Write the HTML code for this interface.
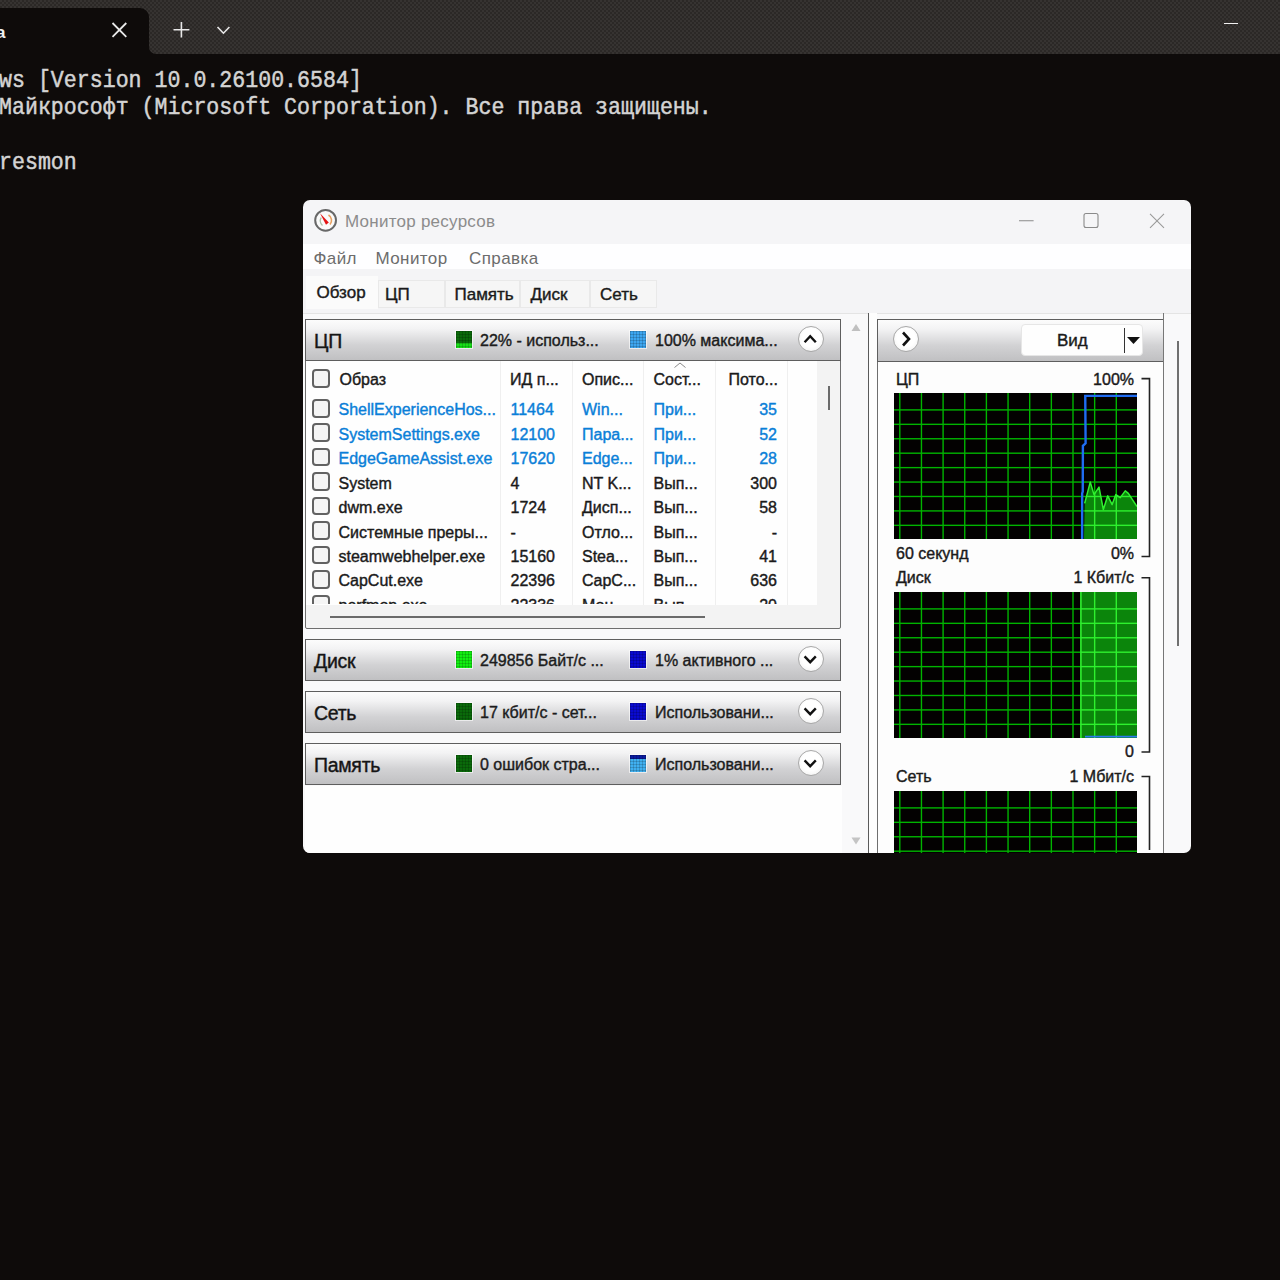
<!DOCTYPE html><html><head><meta charset="utf-8"><style>
*{margin:0;padding:0;box-sizing:border-box}
html,body{width:1280px;height:1280px;overflow:hidden;background:#0e0b0a;font-family:"Liberation Sans",sans-serif}
.a{position:absolute}
.mono{position:absolute;font-family:"Liberation Mono",monospace;color:#d4d4d4;font-size:21.6px;line-height:1;white-space:pre;transform:scaleY(1.106);transform-origin:0 0;-webkit-text-stroke:0.45px #d4d4d4}
.t{position:absolute;white-space:nowrap;line-height:1;color:#1a1a1a;-webkit-text-stroke:0.4px currentColor}
#win{left:0;top:0;width:1280px;height:1280px;clip-path:inset(200px 89px 427px 303px round 7px)}
.hdr{position:absolute;left:305px;width:536px;height:42px;border:1px solid #5e5e5e;background:linear-gradient(#fcfcfc 0%,#f3f3f4 22%,#d2d2d4 62%,#c0c0c2 100%)}
.htitle{position:absolute;font-size:19.5px;letter-spacing:-0.3px;color:#151515;white-space:nowrap;line-height:1;-webkit-text-stroke:0.4px #151515}
.sq{position:absolute;width:16px;height:17px;box-shadow:0 0 0 1px rgba(255,255,255,.6)}
.sq::after{content:'';position:absolute;inset:0;background-image:linear-gradient(rgba(0,0,0,.16) 1px,transparent 1px),linear-gradient(90deg,rgba(0,0,0,.16) 1px,transparent 1px);background-size:3px 3px}
.hs{position:absolute;font-size:16px;color:#1c1c1c;white-space:nowrap;line-height:1;-webkit-text-stroke:0.4px #1c1c1c}
.cbtn{position:absolute;width:26px;height:26px;border-radius:50%;border:1px solid #a8a8a8;background:radial-gradient(circle at 50% 45%,#ffffff 50%,#ececec 100%)}
.cb{position:absolute;left:311.6px;width:18.4px;height:18.6px;border:2px solid #626262;border-radius:4px;background:#f5f5f5}
.r{position:absolute;font-size:16px;white-space:nowrap;line-height:1;color:#1a1a1a;-webkit-text-stroke:0.4px currentColor}
.bl{color:#0a7fd8}
</style></head><body>
<div class="a" style="left:0;top:0;width:1280px;height:53.5px;background-color:#302d2b;background-image:repeating-conic-gradient(#2b2826 0 25%,#363331 0 50%);background-size:4px 4px"></div>
<div class="a" style="left:-20px;top:7.5px;width:169px;height:46px;background:#0e0b0a;border-radius:9px 9px 0 0"></div>
<div class="a" style="left:149px;top:46px;width:7px;height:7.5px;background:#0e0b0a"></div>
<div class="a" style="left:149px;top:40px;width:14px;height:13.5px;background-color:#302d2b;background-image:repeating-conic-gradient(#2b2826 0 25%,#363331 0 50%);background-size:4px 4px;background-position:-149px -40px;border-radius:0 0 0 7px"></div>
<svg class="a" style="left:0;top:0" width="260" height="53">
 <path d="M112.5 23 L126.3 36.9 M126.3 23 L112.5 36.9" stroke="#e8e8e8" stroke-width="1.8" fill="none"/>
 <path d="M173.5 29.8 H189.4 M181.4 21.9 V37.5" stroke="#e8e8e8" stroke-width="1.6" fill="none"/>
 <path d="M217.5 27 L223.4 33.2 L229.4 27" stroke="#e8e8e8" stroke-width="1.6" fill="none"/>
</svg>
<div class="t" style="left:-4px;top:24px;font-size:17px;font-weight:bold;color:#f0f0f0;-webkit-text-stroke:0">а</div>
<div class="a" style="left:1224px;top:22.5px;width:14px;height:1.5px;background:#f0f0f0"></div>
<div class="mono" style="left:-1px;top:68.5px">ws [Version 10.0.26100.6584]</div>
<div class="mono" style="left:-1px;top:96px">Майкрософт (Microsoft Corporation). Все права защищены.</div>
<div class="mono" style="left:-1px;top:150.5px">resmon</div>
<div class="a" id="win">
<div class="a" style="left:303px;top:200px;width:888px;height:44px;background:#f5f5f7"></div>
<div class="a" style="left:303px;top:244px;width:888px;height:25px;background:#fefeff"></div>
<div class="a" style="left:303px;top:269px;width:888px;height:44px;background:#f4f4f6"></div>
<div class="a" style="left:303px;top:313px;width:888px;height:540px;background:#f9f9fa"></div>
<div class="a" style="left:303px;top:312.5px;width:888px;height:1px;background:#e4e4e4"></div>
<svg class="a" style="left:313px;top:208px" width="26" height="26">
  <circle cx="12.6" cy="12.3" r="10.4" fill="#fafafa" stroke="#686868" stroke-width="2"/>
  <path d="M8.2 9.5 A6.3 6.3 0 0 0 9.5 17.5" stroke="#a8c0a8" stroke-width="1.4" fill="none"/>
  <path d="M15.5 7 A6.3 6.3 0 0 1 17 16.5" stroke="#e8a060" stroke-width="1.6" fill="none"/>
  <path d="M7 5.2 L15.8 14.6 L13 16.8 Z" fill="#e41414"/>
 </svg>
<div class="t" style="left:345px;top:213.3px;font-size:17px;letter-spacing:0.25px;color:#8c8c8c;-webkit-text-stroke:0">Монитор ресурсов</div>
<svg class="a" style="left:1010px;top:205px" width="170" height="30">
  <path d="M9 15.8 H23.6" stroke="#8a8a8a" stroke-width="1.1"/>
  <rect x="74" y="8.5" width="14" height="14" rx="2" fill="none" stroke="#8a8a8a" stroke-width="1.1"/>
  <path d="M140 8.8 L154 22.8 M154 8.8 L140 22.8" stroke="#9a9a9a" stroke-width="1.1"/>
 </svg>
<div class="t" style="left:313.5px;top:249.5px;font-size:17px;letter-spacing:0.4px;color:#6c6c6c;-webkit-text-stroke:0">Файл</div>
<div class="t" style="left:375.5px;top:249.5px;font-size:17px;letter-spacing:0.4px;color:#6c6c6c;-webkit-text-stroke:0">Монитор</div>
<div class="t" style="left:469px;top:249.5px;font-size:17px;letter-spacing:0.4px;color:#6c6c6c;-webkit-text-stroke:0">Справка</div>
<div class="a" style="left:306px;top:276px;width:72px;height:33px;background:#fbfbfb"></div>
<div class="a" style="left:378px;top:280px;width:66.6px;height:28px;background:#f6f6f6;border:1px solid #e9e9e9"></div>
<div class="a" style="left:444.6px;top:280px;width:75.6px;height:28px;background:#f6f6f6;border:1px solid #e9e9e9"></div>
<div class="a" style="left:520.2px;top:280px;width:69.8px;height:28px;background:#f6f6f6;border:1px solid #e9e9e9"></div>
<div class="a" style="left:590px;top:280px;width:66.6px;height:28px;background:#f6f6f6;border:1px solid #e9e9e9"></div>
<div class="t" style="left:316.5px;top:283.5px;font-size:17px">Обзор</div>
<div class="t" style="left:385px;top:286px;font-size:17px">ЦП</div>
<div class="t" style="left:454.5px;top:286px;font-size:17px">Память</div>
<div class="t" style="left:530.5px;top:286px;font-size:17px">Диск</div>
<div class="t" style="left:600px;top:286px;font-size:17px">Сеть</div>
<div class="a" style="left:305px;top:319px;width:536px;height:310px;border:1px solid #6e6e6e;border-radius:0 0 2px 2px;background:#f3f3f3"></div>
<div class="a" style="left:306px;top:361px;width:511px;height:244px;background:#fefefe"></div>
<div class="a" style="left:499.5px;top:361px;width:1px;height:244px;background:#efefef"></div>
<div class="a" style="left:571.5px;top:361px;width:1px;height:244px;background:#efefef"></div>
<div class="a" style="left:643px;top:361px;width:1px;height:244px;background:#efefef"></div>
<div class="a" style="left:715px;top:361px;width:1px;height:244px;background:#efefef"></div>
<div class="a" style="left:787px;top:361px;width:1px;height:244px;background:#efefef"></div>
<div class="a" style="left:828px;top:386px;width:1.5px;height:24px;background:#6a6a6a"></div>
<div class="a" style="left:330px;top:616px;width:375px;height:1.6px;background:#6a6a6a"></div>
<svg class="a" style="left:672px;top:361px" width="16" height="8"><path d="M2.5 6.5 L8 2 L13.5 6.5" stroke="#8a8a8a" stroke-width="1" fill="none"/></svg>
<div class="cb" style="top:369px"></div>
<div class="r" style="left:339.5px;top:372.3px">Образ</div>
<div class="r" style="left:510px;top:372.3px">ИД п...</div>
<div class="r" style="left:582px;top:372.3px">Опис...</div>
<div class="r" style="left:653.5px;top:372.3px">Сост...</div>
<div class="r" style="left:728.5px;top:372.3px">Пото...</div>
<div class="a" style="left:306px;top:605px;width:511px;height:0;overflow:visible"></div>
<div class="a" style="left:306px;top:390px;width:511px;height:213.6px;overflow:hidden">
<div class="cb" style="left:5.6px;top:9.0px"></div>
<div class="r bl" style="left:32.5px;top:12.3px">ShellExperienceHos...</div>
<div class="r bl" style="left:204.5px;top:12.3px">11464</div>
<div class="r bl" style="left:276px;top:12.3px">Win...</div>
<div class="r bl" style="left:347.5px;top:12.3px">При...</div>
<div class="r bl" style="right:40px;top:12.3px">35</div>
<div class="cb" style="left:5.6px;top:33.4px"></div>
<div class="r bl" style="left:32.5px;top:36.7px">SystemSettings.exe</div>
<div class="r bl" style="left:204.5px;top:36.7px">12100</div>
<div class="r bl" style="left:276px;top:36.7px">Пара...</div>
<div class="r bl" style="left:347.5px;top:36.7px">При...</div>
<div class="r bl" style="right:40px;top:36.7px">52</div>
<div class="cb" style="left:5.6px;top:57.9px"></div>
<div class="r bl" style="left:32.5px;top:61.2px">EdgeGameAssist.exe</div>
<div class="r bl" style="left:204.5px;top:61.2px">17620</div>
<div class="r bl" style="left:276px;top:61.2px">Edge...</div>
<div class="r bl" style="left:347.5px;top:61.2px">При...</div>
<div class="r bl" style="right:40px;top:61.2px">28</div>
<div class="cb" style="left:5.6px;top:82.3px"></div>
<div class="r" style="left:32.5px;top:85.6px">System</div>
<div class="r" style="left:204.5px;top:85.6px">4</div>
<div class="r" style="left:276px;top:85.6px">NT K...</div>
<div class="r" style="left:347.5px;top:85.6px">Вып...</div>
<div class="r" style="right:40px;top:85.6px">300</div>
<div class="cb" style="left:5.6px;top:106.8px"></div>
<div class="r" style="left:32.5px;top:110.1px">dwm.exe</div>
<div class="r" style="left:204.5px;top:110.1px">1724</div>
<div class="r" style="left:276px;top:110.1px">Дисп...</div>
<div class="r" style="left:347.5px;top:110.1px">Вып...</div>
<div class="r" style="right:40px;top:110.1px">58</div>
<div class="cb" style="left:5.6px;top:131.2px"></div>
<div class="r" style="left:32.5px;top:134.5px">Системные преры...</div>
<div class="r" style="left:204.5px;top:134.5px">-</div>
<div class="r" style="left:276px;top:134.5px">Отло...</div>
<div class="r" style="left:347.5px;top:134.5px">Вып...</div>
<div class="r" style="right:40px;top:134.5px">-</div>
<div class="cb" style="left:5.6px;top:155.7px"></div>
<div class="r" style="left:32.5px;top:159.0px">steamwebhelper.exe</div>
<div class="r" style="left:204.5px;top:159.0px">15160</div>
<div class="r" style="left:276px;top:159.0px">Stea...</div>
<div class="r" style="left:347.5px;top:159.0px">Вып...</div>
<div class="r" style="right:40px;top:159.0px">41</div>
<div class="cb" style="left:5.6px;top:180.2px"></div>
<div class="r" style="left:32.5px;top:183.4px">CapCut.exe</div>
<div class="r" style="left:204.5px;top:183.4px">22396</div>
<div class="r" style="left:276px;top:183.4px">CapC...</div>
<div class="r" style="left:347.5px;top:183.4px">Вып...</div>
<div class="r" style="right:40px;top:183.4px">636</div>
<div class="cb" style="left:5.6px;top:204.6px"></div>
<div class="r" style="left:32.5px;top:207.9px">perfmon.exe</div>
<div class="r" style="left:204.5px;top:207.9px">22336</div>
<div class="r" style="left:276px;top:207.9px">Мон...</div>
<div class="r" style="left:347.5px;top:207.9px">Вып...</div>
<div class="r" style="right:40px;top:207.9px">20</div>
</div>
<div class="hdr" style="top:319px"></div>
<div class="htitle" style="left:314px;top:331.5px">ЦП</div>
<div class="sq" style="left:456px;top:331px;background:linear-gradient(#0a6a0a 0%,#0a6a0a 72%,#18e018 72%)"></div>
<div class="hs" style="left:480px;top:333.3px">22% - использ...</div>
<div class="sq" style="left:630px;top:331px;background:#3da6f0"></div>
<div class="hs" style="left:655px;top:333.3px">100% максима...</div>
<div class="cbtn" style="left:797.5px;top:325.5px"></div>
<svg class="a" style="left:797.3px;top:325.5px" width="26" height="26"><path d="M7.6 16.2 L13.2 10.2 L18.8 16.2" stroke="#111" stroke-width="2.4" fill="none"/></svg>
<div class="a" style="left:305px;top:786px;width:537px;height:67px;background:#fefefe"></div>
<div class="hdr" style="top:639px"></div>
<div class="htitle" style="left:314px;top:651.5px">Диск</div>
<div class="sq" style="left:456px;top:651px;background:#11ee11"></div>
<div class="hs" style="left:480px;top:653.3px">249856 Байт/с ...</div>
<div class="sq" style="left:630px;top:651px;background:#0a0ad0"></div>
<div class="hs" style="left:655px;top:653.3px">1% активного ...</div>
<div class="cbtn" style="left:797.5px;top:645.5px"></div>
<svg class="a" style="left:797.3px;top:645.5px" width="26" height="26"><path d="M7.6 10.4 L13.2 16.2 L18.8 10.4" stroke="#111" stroke-width="2.4" fill="none"/></svg>
<div class="hdr" style="top:691px"></div>
<div class="htitle" style="left:314px;top:703.5px">Сеть</div>
<div class="sq" style="left:456px;top:703px;background:#0a6a0a"></div>
<div class="hs" style="left:480px;top:705.3px">17 кбит/с - сет...</div>
<div class="sq" style="left:630px;top:703px;background:#0a0ad0"></div>
<div class="hs" style="left:655px;top:705.3px">Использовани...</div>
<div class="cbtn" style="left:797.5px;top:697.5px"></div>
<svg class="a" style="left:797.3px;top:697.5px" width="26" height="26"><path d="M7.6 10.4 L13.2 16.2 L18.8 10.4" stroke="#111" stroke-width="2.4" fill="none"/></svg>
<div class="hdr" style="top:743px"></div>
<div class="htitle" style="left:314px;top:755.5px">Память</div>
<div class="sq" style="left:456px;top:755px;background:#0a6a0a"></div>
<div class="hs" style="left:480px;top:757.3px">0 ошибок стра...</div>
<div class="sq" style="left:630px;top:755px;background:linear-gradient(#0a1aa0 0%,#0a1aa0 25%,#40b0f0 25%)"></div>
<div class="hs" style="left:655px;top:757.3px">Использовани...</div>
<div class="cbtn" style="left:797.5px;top:749.5px"></div>
<svg class="a" style="left:797.3px;top:749.5px" width="26" height="26"><path d="M7.6 10.4 L13.2 16.2 L18.8 10.4" stroke="#111" stroke-width="2.4" fill="none"/></svg>
<svg class="a" style="left:849px;top:322px" width="14" height="10"><path d="M7 2 L11.5 9 L2.5 9 Z" fill="#c0c0c0"/></svg>
<svg class="a" style="left:849px;top:836px" width="14" height="10"><path d="M7 8.5 L11.5 1.5 L2.5 1.5 Z" fill="#c4c4c4"/></svg>
<div class="a" style="left:867.5px;top:313px;width:1.6px;height:540px;background:#5a5a5a"></div>
<div class="a" style="left:869px;top:313px;width:8px;height:540px;background:#fdfdfd"></div>
<div class="a" style="left:876.5px;top:319px;width:287.5px;height:560px;background:#fdfdfd;border:1px solid #6e6e6e"></div>
<div class="a" style="left:876.5px;top:319px;width:287.5px;height:42.5px;border:1px solid #5e5e5e;background:linear-gradient(#fcfcfc 0%,#f3f3f4 22%,#d2d2d4 62%,#c0c0c2 100%)"></div>
<div class="cbtn" style="left:892.5px;top:326px"></div>
<svg class="a" style="left:892.5px;top:326px" width="26" height="26"><path d="M10 6.5 L16 13 L10 19.5" stroke="#111" stroke-width="2.6" fill="none"/></svg>
<div class="a" style="left:1021px;top:323.5px;width:122px;height:32px;background:#fefefe;border-radius:4px;border:1px solid #e6e6e6"></div>
<div class="t" style="left:1057px;top:331.5px;font-size:17px">Вид</div>
<div class="a" style="left:1123.5px;top:327.5px;width:1.6px;height:25px;background:#333"></div>
<svg class="a" style="left:1126px;top:336px" width="15" height="9"><path d="M1 1 H14 L7.5 8 Z" fill="#111"/></svg>
<div class="a" style="left:1177px;top:341px;width:2px;height:305px;background:#707070"></div>
<div class="a" style="left:1163px;top:313px;width:1.2px;height:540px;background:#777"></div>
<svg class="a" style="left:893.75px;top:393.4px" width="243" height="146"><rect width="243" height="146" fill="#030101"/><g fill="#00b400"><rect x="5.10" y="0" width="1.4" height="146"/><rect x="26.75" y="0" width="1.4" height="146"/><rect x="48.40" y="0" width="1.4" height="146"/><rect x="70.05" y="0" width="1.4" height="146"/><rect x="91.70" y="0" width="1.4" height="146"/><rect x="113.35" y="0" width="1.4" height="146"/><rect x="135.00" y="0" width="1.4" height="146"/><rect x="156.65" y="0" width="1.4" height="146"/><rect x="178.30" y="0" width="1.4" height="146"/><rect x="199.95" y="0" width="1.4" height="146"/><rect x="221.60" y="0" width="1.4" height="146"/><rect x="0" y="16.20" width="243" height="1.4"/><rect x="0" y="30.63" width="243" height="1.4"/><rect x="0" y="45.06" width="243" height="1.4"/><rect x="0" y="59.49" width="243" height="1.4"/><rect x="0" y="73.92" width="243" height="1.4"/><rect x="0" y="88.35" width="243" height="1.4"/><rect x="0" y="102.78" width="243" height="1.4"/><rect x="0" y="117.21" width="243" height="1.4"/><rect x="0" y="131.64" width="243" height="1.4"/></g><clipPath id="cpuc"><path d="M190.65 110.35 L196.25 89.1 L200 101.6 L205 94.1 L209.35 116.6 L213.75 102.85 L218.15 111.6 L221.85 101.6 L226.25 104.6 L231.25 97.85 L234.35 100.35 L243 113.5 L243 146 L190 146 Z"/></clipPath><path d="M190.65 110.35 L196.25 89.1 L200 101.6 L205 94.1 L209.35 116.6 L213.75 102.85 L218.15 111.6 L221.85 101.6 L226.25 104.6 L231.25 97.85 L234.35 100.35 L243 113.5 L243 146 L190 146 Z" fill="#0b850b"/><g fill="#2ef02e" clip-path="url(#cpuc)"><rect x="5.10" y="0" width="1.4" height="146"/><rect x="26.75" y="0" width="1.4" height="146"/><rect x="48.40" y="0" width="1.4" height="146"/><rect x="70.05" y="0" width="1.4" height="146"/><rect x="91.70" y="0" width="1.4" height="146"/><rect x="113.35" y="0" width="1.4" height="146"/><rect x="135.00" y="0" width="1.4" height="146"/><rect x="156.65" y="0" width="1.4" height="146"/><rect x="178.30" y="0" width="1.4" height="146"/><rect x="199.95" y="0" width="1.4" height="146"/><rect x="221.60" y="0" width="1.4" height="146"/><rect x="0" y="16.20" width="243" height="1.4"/><rect x="0" y="30.63" width="243" height="1.4"/><rect x="0" y="45.06" width="243" height="1.4"/><rect x="0" y="59.49" width="243" height="1.4"/><rect x="0" y="73.92" width="243" height="1.4"/><rect x="0" y="88.35" width="243" height="1.4"/><rect x="0" y="102.78" width="243" height="1.4"/><rect x="0" y="117.21" width="243" height="1.4"/><rect x="0" y="131.64" width="243" height="1.4"/></g></svg>
<svg class="a" style="left:893.75px;top:393.4px" width="243" height="146">
<path d="M190.65 110.35 L196.25 89.1 L200 101.6 L205 94.1 L209.35 116.6 L213.75 102.85 L218.15 111.6 L221.85 101.6 L226.25 104.6 L231.25 97.85 L234.35 100.35 L243 113.5" stroke="#30f030" stroke-width="1.5" fill="none" stroke-linejoin="round"/>
<path d="M188.15 146 L188.15 100.35 L188.75 98.5 L188.9 52.85 L191.6 50.35 L191.25 2.85 L243 2.85" stroke="#1f6cf2" stroke-width="2.4" fill="none"/>
</svg>
<svg class="a" style="left:893.75px;top:592px" width="243" height="146"><rect width="243" height="146" fill="#030101"/><g fill="#00b400"><rect x="5.10" y="0" width="1.4" height="146"/><rect x="26.75" y="0" width="1.4" height="146"/><rect x="48.40" y="0" width="1.4" height="146"/><rect x="70.05" y="0" width="1.4" height="146"/><rect x="91.70" y="0" width="1.4" height="146"/><rect x="113.35" y="0" width="1.4" height="146"/><rect x="135.00" y="0" width="1.4" height="146"/><rect x="156.65" y="0" width="1.4" height="146"/><rect x="178.30" y="0" width="1.4" height="146"/><rect x="199.95" y="0" width="1.4" height="146"/><rect x="221.60" y="0" width="1.4" height="146"/><rect x="0" y="16.20" width="243" height="1.4"/><rect x="0" y="30.63" width="243" height="1.4"/><rect x="0" y="45.06" width="243" height="1.4"/><rect x="0" y="59.49" width="243" height="1.4"/><rect x="0" y="73.92" width="243" height="1.4"/><rect x="0" y="88.35" width="243" height="1.4"/><rect x="0" y="102.78" width="243" height="1.4"/><rect x="0" y="117.21" width="243" height="1.4"/><rect x="0" y="131.64" width="243" height="1.4"/></g><clipPath id="diskc"><path d="M186.7 0 H243 V146 H186.7 Z"/></clipPath><path d="M186.7 0 H243 V146 H186.7 Z" fill="#0b850b"/><g fill="#2ef02e" clip-path="url(#diskc)"><rect x="5.10" y="0" width="1.4" height="146"/><rect x="26.75" y="0" width="1.4" height="146"/><rect x="48.40" y="0" width="1.4" height="146"/><rect x="70.05" y="0" width="1.4" height="146"/><rect x="91.70" y="0" width="1.4" height="146"/><rect x="113.35" y="0" width="1.4" height="146"/><rect x="135.00" y="0" width="1.4" height="146"/><rect x="156.65" y="0" width="1.4" height="146"/><rect x="178.30" y="0" width="1.4" height="146"/><rect x="199.95" y="0" width="1.4" height="146"/><rect x="221.60" y="0" width="1.4" height="146"/><rect x="0" y="16.20" width="243" height="1.4"/><rect x="0" y="30.63" width="243" height="1.4"/><rect x="0" y="45.06" width="243" height="1.4"/><rect x="0" y="59.49" width="243" height="1.4"/><rect x="0" y="73.92" width="243" height="1.4"/><rect x="0" y="88.35" width="243" height="1.4"/><rect x="0" y="102.78" width="243" height="1.4"/><rect x="0" y="117.21" width="243" height="1.4"/><rect x="0" y="131.64" width="243" height="1.4"/></g></svg>
<svg class="a" style="left:893.75px;top:592px" width="243" height="146"><path d="M186.9 0 V146" stroke="#30f030" stroke-width="1.6"/><path d="M191 144.6 H243" stroke="#2a7af0" stroke-width="1.8"/></svg>
<svg class="a" style="left:893.75px;top:791.2px" width="243" height="80"><rect width="243" height="80" fill="#030101"/><g fill="#00b400"><rect x="5.10" y="0" width="1.4" height="80"/><rect x="26.75" y="0" width="1.4" height="80"/><rect x="48.40" y="0" width="1.4" height="80"/><rect x="70.05" y="0" width="1.4" height="80"/><rect x="91.70" y="0" width="1.4" height="80"/><rect x="113.35" y="0" width="1.4" height="80"/><rect x="135.00" y="0" width="1.4" height="80"/><rect x="156.65" y="0" width="1.4" height="80"/><rect x="178.30" y="0" width="1.4" height="80"/><rect x="199.95" y="0" width="1.4" height="80"/><rect x="221.60" y="0" width="1.4" height="80"/><rect x="0" y="16.20" width="243" height="1.4"/><rect x="0" y="30.63" width="243" height="1.4"/><rect x="0" y="45.06" width="243" height="1.4"/><rect x="0" y="59.49" width="243" height="1.4"/><rect x="0" y="73.92" width="243" height="1.4"/></g></svg>
<div class="r" style="left:896px;top:372.1px">ЦП</div>
<div class="r" style="right:146px;top:372.1px">100%</div>
<div class="r" style="left:896px;top:545.5px">60 секунд</div>
<div class="r" style="right:146px;top:545.5px">0%</div>
<div class="r" style="left:896px;top:569.5px">Диск</div>
<div class="r" style="right:146px;top:569.5px">1 Кбит/с</div>
<div class="r" style="right:146px;top:743.5px">0</div>
<div class="r" style="left:896px;top:768.5px">Сеть</div>
<div class="r" style="right:146px;top:768.5px">1 Мбит/с</div>
<svg class="a" style="left:1136px;top:370px" width="20" height="480">
<path d="M5.5 8.6 H13.5 V186.5 H5.5" stroke="#222" stroke-width="1.6" fill="none"/>
<path d="M5.5 207.8 H13.5 V382 H5.5" stroke="#222" stroke-width="1.6" fill="none"/>
<path d="M5.5 406.5 H13.5 V480" stroke="#222" stroke-width="1.6" fill="none"/>
</svg>
</div>
</body></html>
